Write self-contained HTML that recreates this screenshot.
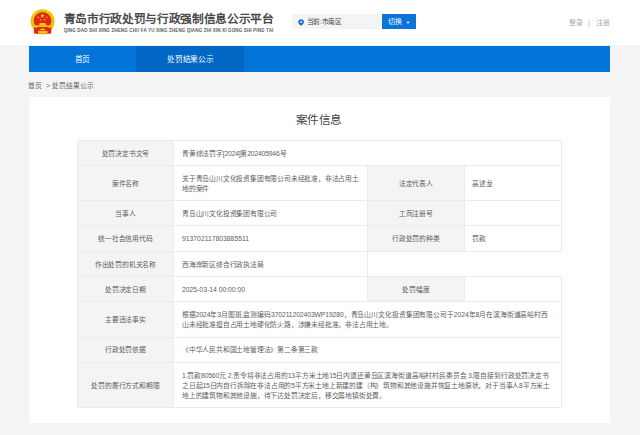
<!DOCTYPE html>
<html lang="zh-CN">
<head>
<meta charset="utf-8">
<style>
*{margin:0;padding:0;box-sizing:border-box;}
html,body{width:640px;height:435px;overflow:hidden;background:#f4f4f4;font-family:"Liberation Sans",sans-serif;color:#333;}
.abs{position:absolute;}
#hdr{position:absolute;left:0;top:0;width:640px;height:45px;background:#fff;}
#title{position:absolute;left:63.5px;top:10.4px;font-size:11.7px;line-height:18px;font-weight:bold;color:#4a4a4a;white-space:nowrap;letter-spacing:-0.32px;}
#pinyin{position:absolute;left:63.8px;top:27.8px;font-size:4.5px;line-height:6px;font-weight:bold;color:#5a5a5a;white-space:nowrap;letter-spacing:0.145px;}
#loc{position:absolute;left:292px;top:14px;width:88.5px;height:14.7px;background:#f4f4f4;}
#loctxt{position:absolute;left:306.7px;top:14.6px;line-height:14.7px;font-size:6.7px;letter-spacing:-0.3px;color:#444;white-space:nowrap;}
#btn{position:absolute;left:382px;top:14px;width:34px;height:14.7px;background:#0b74d8;}
#btntxt{position:absolute;left:388px;top:15px;line-height:14.7px;font-size:7px;color:#fff;white-space:nowrap;}
#caret{position:absolute;left:406.5px;top:21.6px;width:0;height:0;border-left:1.7px solid transparent;border-right:1.7px solid transparent;border-top:1.9px solid #fff;}
.login{position:absolute;top:15.7px;line-height:14px;font-size:7px;color:#a8a8a8;white-space:nowrap;}
#nav{position:absolute;left:28.5px;top:45.5px;width:581.5px;height:26.8px;background:#0074d9;}
.tab{position:absolute;top:0;height:26.8px;line-height:26.8px;padding-top:1px;font-size:7.7px;letter-spacing:-0.25px;color:#fff;text-align:center;}
#crumb{position:absolute;left:28.3px;top:79.8px;line-height:12px;font-size:6.75px;color:#666;white-space:nowrap;}
#box{position:absolute;left:28.5px;top:97px;width:581.5px;height:325.8px;background:#fff;}
#h{position:absolute;left:-1.2px;width:640px;top:111px;line-height:18px;font-size:11.6px;color:#444;text-align:center;letter-spacing:-0.4px;}
.c{position:absolute;font-size:6.8px;line-height:10.3px;color:#5e5e5e;display:flex;align-items:center;white-space:nowrap;letter-spacing:-0.2px;padding-top:2px;}
.g{background:#f4f4f4;justify-content:center;text-align:center;}
.v{padding-left:8.2px;}
.lh{position:absolute;left:76.70px;width:485.10px;height:1px;background:#ebebeb;}
.lv{position:absolute;width:1px;background:#ebebeb;}
</style>
</head>
<body>
<div id="hdr"></div>
<svg class="abs" style="left:28px;top:6px" width="30" height="30" viewBox="28 6 30 30">
  <circle cx="42.6" cy="21.2" r="12" fill="#f0c400"/>
  <circle cx="42.6" cy="20.9" r="8.8" fill="#e1261b"/>
  <polygon points="42.4,13.5 43,15.1 44.6,15.1 43.3,16.1 43.8,17.7 42.4,16.7 41,17.7 41.5,16.1 40.2,15.1 41.8,15.1" fill="#f7d200"/>
  <circle cx="38.1" cy="17.3" r="0.75" fill="#f7d200"/>
  <circle cx="46.8" cy="17.3" r="0.75" fill="#f7d200"/>
  <circle cx="40.5" cy="19.8" r="0.75" fill="#f7d200"/>
  <circle cx="44.5" cy="19.8" r="0.75" fill="#f7d200"/>
  <path d="M40,22.9 L45.2,22.9 L45.9,23.8 L45.9,25.3 L39.3,25.3 L39.3,23.8 Z" fill="#f7d200"/>
  <rect x="35.2" y="25.3" width="15.2" height="1.7" fill="#f2c800"/>
  <path d="M33.8,27.5 Q42.6,29 51.4,27.5 L51.2,33.6 Q42.6,34.8 34,33.6 Z" fill="#e1261b"/>
  <path d="M39.3,30.2 Q42.6,26.9 45.9,30.2 Z" fill="#f7d200"/>
  <path d="M38,31.1 L47.6,31.1 L47.6,33.6 Q42.8,34.2 38,33.6 Z" fill="#f0c400"/>
</svg>
<div id="title">青岛市行政处罚与行政强制信息公示平台</div>
<div id="pinyin">QING DAO SHI XING ZHENG CHU FA YU XING ZHENG QIANG ZHI XIN XI GONG SHI PING TAI</div>
<div id="loc"></div>
<svg class="abs" style="left:297.8px;top:18.8px" width="6.2" height="7" viewBox="0 0 6.2 7">
  <path d="M3.1,0.2 C1.4,0.2 0.2,1.4 0.2,3 C0.2,4.6 3.1,6.9 3.1,6.9 C3.1,6.9 6,4.6 6,3 C6,1.4 4.8,0.2 3.1,0.2 Z M3.1,2.1 A0.85,0.85 0 1,1 3.09,2.1 Z" fill="#0b74d8" fill-rule="evenodd"/>
</svg>
<div id="loctxt">当前:市南区</div>
<div id="btn"></div>
<div id="btntxt">切换</div>
<svg class="abs" style="left:406px;top:21px" width="4" height="3" viewBox="0 0 4 3"><path d="M0.3,0.8 L3.7,0.8 L2,2.7 Z" fill="#fff"/></svg>
<div class="login" style="left:569px">登录</div><div class="login" style="left:588.3px;font-size:6.5px">|</div><div class="login" style="left:596px">注册</div>
<div id="nav">
  <div class="tab" style="left:0;width:107.8px;">首页</div>
  <div class="tab" style="left:107.8px;width:108px;background:#0067c4;">处罚结果公示</div>
</div>
<div id="crumb">首页 &nbsp;&gt; 处罚结果公示</div>
<div id="box"></div>
<div id="h">案件信息</div>
<div class="c g" style="left:77.20px;top:140.06px;width:96.60px;height:25.24px;"><div>处罚决定书文号</div></div>
<div class="c v" style="left:173.80px;top:140.06px;width:387.50px;height:25.24px;"><div>青黄综法罚字[2024]第202405946号</div></div>
<div class="c g" style="left:77.20px;top:165.30px;width:96.60px;height:35.00px;"><div>案件名称</div></div>
<div class="c v" style="left:173.80px;top:165.30px;width:193.50px;height:35.00px;"><div>关于青岛山川文化投资集团有限公司未经批准，非法占用土<br>地的案件</div></div>
<div class="c g" style="left:367.30px;top:165.30px;width:97.00px;height:35.00px;"><div>法定代表人</div></div>
<div class="c v" style="left:464.30px;top:165.30px;width:97.00px;height:35.00px;"><div>高述龙</div></div>
<div class="c g" style="left:77.20px;top:200.30px;width:96.60px;height:25.40px;"><div>当事人</div></div>
<div class="c v" style="left:173.80px;top:200.30px;width:193.50px;height:25.40px;"><div>青岛山川文化投资集团有限公司</div></div>
<div class="c g" style="left:367.30px;top:200.30px;width:97.00px;height:25.40px;"><div>工商注册号</div></div>
<div class="c v" style="left:464.30px;top:200.30px;width:97.00px;height:25.40px;"><div></div></div>
<div class="c g" style="left:77.20px;top:225.70px;width:96.60px;height:25.70px;"><div>统一社会信用代码</div></div>
<div class="c v" style="left:173.80px;top:225.70px;width:193.50px;height:25.70px;letter-spacing:0"><div>913702117803885511</div></div>
<div class="c g" style="left:367.30px;top:225.70px;width:97.00px;height:25.70px;"><div>行政处罚的种类</div></div>
<div class="c v" style="left:464.30px;top:225.70px;width:97.00px;height:25.70px;"><div>罚款</div></div>
<div class="c g" style="left:77.20px;top:251.40px;width:96.60px;height:25.30px;"><div>作出处罚的机关名称</div></div>
<div class="c v" style="left:173.80px;top:251.40px;width:193.50px;height:25.30px;"><div>西海岸新区综合行政执法局</div></div>
<div class="c g" style="left:77.20px;top:276.70px;width:96.60px;height:24.90px;"><div>处罚决定日期</div></div>
<div class="c v" style="left:173.80px;top:276.70px;width:193.50px;height:24.90px;letter-spacing:0"><div>2025-03-14 00:00:00</div></div>
<div class="c g" style="left:367.30px;top:276.70px;width:97.00px;height:24.90px;"><div>处罚幅度</div></div>
<div class="c v" style="left:464.30px;top:276.70px;width:97.00px;height:24.90px;"><div></div></div>
<div class="c g" style="left:77.20px;top:301.60px;width:96.60px;height:35.50px;"><div>主要违法事实</div></div>
<div class="c v" style="left:173.80px;top:301.60px;width:387.50px;height:35.50px;"><div><span style="letter-spacing:-0.11px">根据2024年3月图斑,监测编码370211202403WP19280，青岛山川文化投资集团有限公司于2024年8月在滨海街道高峪村西</span><br>山未经批准擅自占用土地硬化防火路，涉嫌未经批准，非法占用土地。</div></div>
<div class="c g" style="left:77.20px;top:337.10px;width:96.60px;height:25.10px;"><div>行政处罚依据</div></div>
<div class="c v" style="left:173.80px;top:337.10px;width:387.50px;height:25.10px;"><div>《中华人民共和国土地管理法》第二条第三款</div></div>
<div class="c g" style="left:77.20px;top:362.20px;width:96.60px;height:45.60px;"><div>处罚的履行方式和期限</div></div>
<div class="c v" style="left:173.80px;top:362.20px;width:387.50px;height:45.60px;"><div><span style="letter-spacing:-0.16px">1.罚款80560元 2.责令将非法占用的13平方米土地15日内退还黄岛区滨海街道高峪村村民委员会 3.限自接到行政处罚决定书</span><br>之日起15日内自行拆除在非法占用的5平方米土地上新建的建（构）筑物和其他设施并恢复土地原状，对于当事人8平方米土<br>地上的建筑物和其他设施，待下达处罚决定后，移交属地镇街处置。</div></div>
<div class="lv" style="left:173.30px;top:140.06px;height:25.24px"></div>
<div class="lv" style="left:173.30px;top:165.30px;height:35.00px"></div>
<div class="lv" style="left:366.80px;top:165.30px;height:35.00px"></div>
<div class="lv" style="left:463.80px;top:165.30px;height:35.00px"></div>
<div class="lv" style="left:173.30px;top:200.30px;height:25.40px"></div>
<div class="lv" style="left:366.80px;top:200.30px;height:25.40px"></div>
<div class="lv" style="left:463.80px;top:200.30px;height:25.40px"></div>
<div class="lv" style="left:173.30px;top:225.70px;height:25.70px"></div>
<div class="lv" style="left:366.80px;top:225.70px;height:25.70px"></div>
<div class="lv" style="left:463.80px;top:225.70px;height:25.70px"></div>
<div class="lv" style="left:173.30px;top:251.40px;height:25.30px"></div>
<div class="lv" style="left:173.30px;top:276.70px;height:24.90px"></div>
<div class="lv" style="left:366.80px;top:276.70px;height:24.90px"></div>
<div class="lv" style="left:463.80px;top:276.70px;height:24.90px"></div>
<div class="lv" style="left:173.30px;top:301.60px;height:35.50px"></div>
<div class="lv" style="left:173.30px;top:337.10px;height:25.10px"></div>
<div class="lv" style="left:173.30px;top:362.20px;height:45.60px"></div>
<div class="lh" style="top:139.56px"></div>
<div class="lh" style="top:164.80px"></div>
<div class="lh" style="top:199.80px"></div>
<div class="lh" style="top:225.20px"></div>
<div class="lh" style="top:250.90px"></div>
<div class="lh" style="top:276.20px"></div>
<div class="lh" style="top:301.10px"></div>
<div class="lh" style="top:336.60px"></div>
<div class="lh" style="top:361.70px"></div>
<div class="lh" style="top:407.30px"></div>
<div class="lv" style="left:76.70px;top:140.06px;height:267.74px"></div>
<div class="lv" style="left:560.80px;top:139.56px;height:26.24px"></div>
<div class="lv" style="left:560.80px;top:164.80px;height:36.00px"></div>
<div class="lv" style="left:560.80px;top:199.80px;height:26.40px"></div>
<div class="lv" style="left:560.80px;top:225.20px;height:26.70px"></div>
<div class="lv" style="left:366.80px;top:251.40px;height:25.30px"></div>
<div class="lv" style="left:560.80px;top:276.20px;height:25.90px"></div>
<div class="lv" style="left:560.80px;top:301.10px;height:36.50px"></div>
<div class="lv" style="left:560.80px;top:336.60px;height:26.10px"></div>
<div class="lv" style="left:560.80px;top:361.70px;height:46.60px"></div>
</body>
</html>
